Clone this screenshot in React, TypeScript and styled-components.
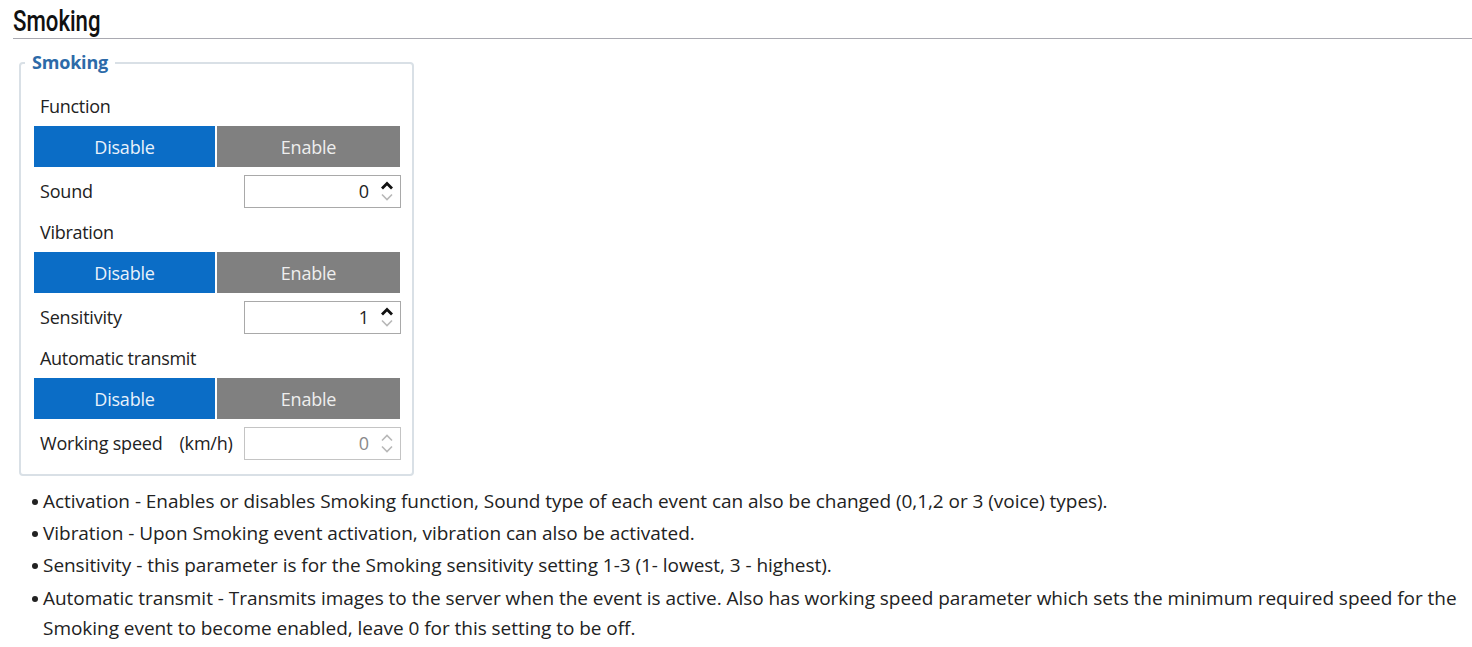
import React from "react";
import styled, { createGlobalStyle } from "styled-components";

const Global = createGlobalStyle`
  html, body { margin: 0; padding: 0; background: #fff; }
  body { font-family: "Open Sans", "Noto Sans", sans-serif; color: #222; }
`;

const Page = styled.div`
  width: 1472px;
  padding: 0 0 0 13px;
  box-sizing: border-box;
`;

const Heading = styled.h2`
  margin: 0;
  padding-top: 3px;
  height: 35px;
  font-weight: 400;
  border-bottom: 1px solid #a9a9b1;
`;

const HeadingText = styled.span`
  display: inline-block;
  font-family: "Roboto", "Liberation Sans", sans-serif;
  font-weight: 500;
  font-size: 30px;
  line-height: 35px;
  color: #111;
  transform: scaleX(0.74);
  transform-origin: left center;
`;

const Panel = styled.div`
  position: relative;
  width: 395px;
  margin: 23px 0 0 6px;
  box-sizing: border-box;
  border: 2px solid #d9e0e6;
  border-radius: 4px;
  padding: 25px 11px 14px 13px;
  font-family: "Open Sans", "Noto Sans", sans-serif;
  font-size: 18px;
  color: #222;
`;

const Legend = styled.span`
  position: absolute;
  left: 4px;
  top: -15px;
  padding: 0 7px;
  background: #fff;
  font-weight: 700;
  font-size: 18px;
  line-height: 26px;
  color: #2c6aa8;
  letter-spacing: -0.2px;
`;

const Rows = styled.div`
  display: flex;
  flex-direction: column;
  gap: 7.5px;
`;

const Group = styled.div`
  display: flex;
  flex-direction: column;
  gap: 3px;
`;

const Label = styled.div`
  height: 34px;
  line-height: 34px;
  padding-left: 6px;
  letter-spacing: -0.3px;
`;

const Toggle = styled.div`
  display: grid;
  grid-template-columns: 181px 183px;
  gap: 2px;
  height: 41px;
`;

const ToggleBtn = styled.div<{ $active?: boolean }>`
  display: flex;
  align-items: center;
  justify-content: center;
  background: ${(p) => (p.$active ? "#0b6dc6" : "#808080")};
  color: ${(p) => (p.$active ? "#e9f2fb" : "#eeeeee")};
  font-size: 18px;
  letter-spacing: -0.2px;
`;

const InputRow = styled.div`
  display: flex;
  align-items: center;
  justify-content: space-between;
  height: 33px;
`;

const RowLabel = styled.div`
  display: flex;
  gap: 17px;
  padding-left: 6px;
  letter-spacing: -0.2px;
  white-space: nowrap;
`;

const Spin = styled.div<{ $disabled?: boolean }>`
  display: flex;
  align-items: center;
  justify-content: flex-end;
  width: 157px;
  height: 33px;
  box-sizing: border-box;
  border: 1px solid ${(p) => (p.$disabled ? "#c4c4c4" : "#a9a9a9")};
  background: #fff;
  padding-right: 6px;
  color: ${(p) => (p.$disabled ? "#8a8a8a" : "#222")};
  font-size: 18px;
`;

const Value = styled.span`
  margin-right: 11px;
`;

const Arrows = styled.div`
  display: flex;
  flex-direction: column;
  gap: 3px;
  width: 14px;
`;

const Arrow = ({ dir, color, w }: { dir: "up" | "down"; color: string; w: number }) => (
  <svg width="14" height="9" viewBox="0 0 14 9">
    <path
      d={dir === "up" ? "M2 7.5 L7 2.5 L12 7.5" : "M2 1.5 L7 6.5 L12 1.5"}
      fill="none"
      stroke={color}
      strokeWidth={w}
    />
  </svg>
);

const Spinner = ({ value, disabled }: { value: string; disabled?: boolean }) => (
  <Spin $disabled={disabled}>
    <Value>{value}</Value>
    <Arrows>
      <Arrow dir="up" color={disabled ? "#b8b8b8" : "#111"} w={disabled ? 1.6 : 2.8} />
      <Arrow dir="down" color="#b8b8b8" w={1.6} />
    </Arrows>
  </Spin>
);

const ToggleGroup = ({ label }: { label: string }) => (
  <Group>
    <Label>{label}</Label>
    <Toggle>
      <ToggleBtn $active>Disable</ToggleBtn>
      <ToggleBtn>Enable</ToggleBtn>
    </Toggle>
  </Group>
);

const List = styled.ul`
  list-style: none;
  margin: 10px 0 0 0;
  padding: 0 0 0 30px;
  width: 1450px;
  box-sizing: border-box;
  font-family: "Open Sans", "Noto Sans", sans-serif;
  font-size: 19px;
  line-height: 30px;
  letter-spacing: -0.04px;
  color: #222;
`;

const Item = styled.li`
  position: relative;
  margin-bottom: 2.4px;
  &::before {
    content: "";
    position: absolute;
    left: -11px;
    top: 13px;
    width: 6px;
    height: 6px;
    border-radius: 50%;
    background: #222;
  }
`;

export default function App() {
  return (
    <>
      <Global />
      <Page>
        <Heading>
          <HeadingText>Smoking</HeadingText>
        </Heading>
        <Panel>
          <Legend>Smoking</Legend>
          <Rows>
            <ToggleGroup label="Function" />
            <InputRow>
              <RowLabel>Sound</RowLabel>
              <Spinner value="0" />
            </InputRow>
            <ToggleGroup label="Vibration" />
            <InputRow>
              <RowLabel>Sensitivity</RowLabel>
              <Spinner value="1" />
            </InputRow>
            <ToggleGroup label="Automatic transmit" />
            <InputRow>
              <RowLabel>
                <span>Working speed</span>
                <span>(km/h)</span>
              </RowLabel>
              <Spinner value="0" disabled />
            </InputRow>
          </Rows>
        </Panel>
        <List>
          <Item>
            Activation - Enables or disables Smoking function, Sound type of each event can also be
            changed (0,1,2 or 3 (voice) types).
          </Item>
          <Item>Vibration - Upon Smoking event activation, vibration can also be activated.</Item>
          <Item>
            Sensitivity - this parameter is for the Smoking sensitivity setting 1-3 (1- lowest, 3 -
            highest).
          </Item>
          <Item>
            Automatic transmit - Transmits images to the server when the event is active. Also has
            working speed parameter which sets the minimum required speed for the Smoking event to
            become enabled, leave 0 for this setting to be off.
          </Item>
        </List>
      </Page>
    </>
  );
}
